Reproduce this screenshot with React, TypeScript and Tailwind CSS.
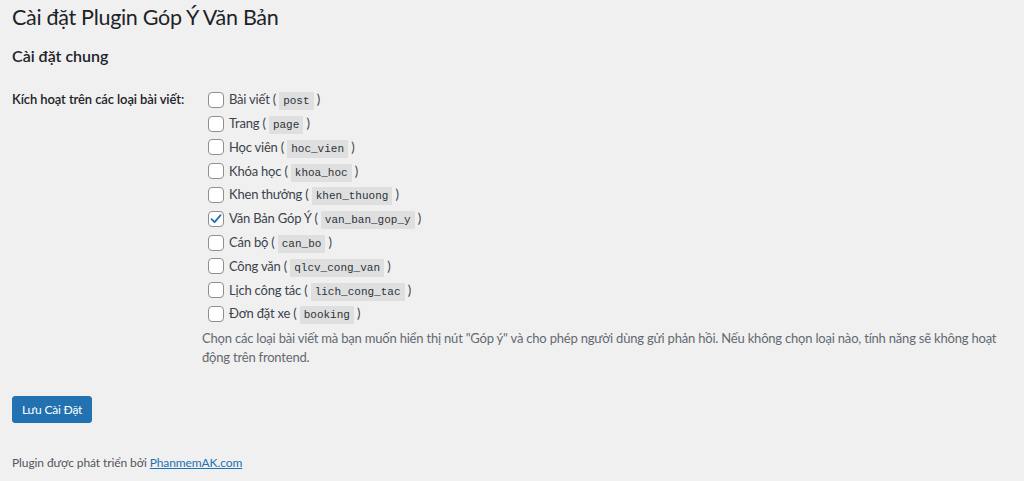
import React from 'react';

const postTypes = [
  { label: 'Bài viết', slug: 'post', checked: false },
  { label: 'Trang', slug: 'page', checked: false },
  { label: 'Học viên', slug: 'hoc_vien', checked: false },
  { label: 'Khóa học', slug: 'khoa_hoc', checked: false },
  { label: 'Khen thưởng', slug: 'khen_thuong', checked: false },
  { label: 'Văn Bản Góp Ý', slug: 'van_ban_gop_y', checked: true },
  { label: 'Cán bộ', slug: 'can_bo', checked: false },
  { label: 'Công văn', slug: 'qlcv_cong_van', checked: false },
  { label: 'Lịch công tác', slug: 'lich_cong_tac', checked: false },
  { label: 'Đơn đặt xe', slug: 'booking', checked: false },
];

const Checkbox: React.FC<{ checked: boolean }> = ({ checked }) => (
  <span className="w-4 h-4 shrink-0 rounded-[4px] border border-[#8c8f94] bg-white flex items-center justify-center">
    {checked && (
      <svg width="14" height="14" viewBox="0 0 14 14" fill="none">
        <path d="M2.5 7.2 L5.6 10.2 L11.6 3.2" stroke="#2271b1" strokeWidth="1.8" strokeLinecap="round" strokeLinejoin="round" />
      </svg>
    )}
  </span>
);

const App: React.FC = () => {
  return (
    <div className="min-h-[481px] w-full bg-[#f0f0f1] text-[#3c434a] font-['Lato','Roboto',sans-serif] text-[13px] px-3 pt-[3px]">
      <h1 className="text-[21.5px] tracking-[-0.3px] leading-[29px] font-normal text-[#1d2327]">Cài đặt Plugin Góp Ý Văn Bản</h1>

      <h2 className="mt-[13px] text-[16px] leading-[22px] font-semibold text-[#1d2327]">Cài đặt chung</h2>

      <div className="flex mt-[21px]">
        <div className="w-[190px] shrink-0 pt-[1px] text-[13px] tracking-[-0.1px] leading-[20px] font-semibold text-[#1d2327]">
          Kích hoạt trên các loại bài viết:
        </div>
        <div className="flex-1 text-[13px] tracking-[-0.2px] text-[#3c434a]">
          <div className="flex flex-col">
            {postTypes.map((t) => (
              <label key={t.slug} className="h-[23.8px] flex items-center gap-[5px] pl-[6px]">
                <Checkbox checked={t.checked} />
                <span className="whitespace-nowrap">
                  {t.label} ({' '}
                  <code className="font-['Liberation_Mono',monospace] tracking-normal text-[11px] text-[#2c3338] bg-[rgba(0,0,0,0.07)] px-[4px] pt-[3px] pb-[3px]">{t.slug}</code>{' '}
                  )
                </span>
              </label>
            ))}
          </div>
          <p className="mt-[3px] text-[13px] tracking-[-0.2px] leading-[19px] text-[#646970] pr-2">
            Chọn các loại bài viết mà bạn muốn hiển thị nút "Góp ý" và cho phép người dùng gửi phản hồi. Nếu không chọn loại nào, tính năng sẽ không hoạt động trên frontend.
          </p>
        </div>
      </div>

      <button className="mt-[29px] h-[27px] px-[9px] rounded-[3px] bg-[#2271b1] border border-[#2271b1] text-white text-[12px] tracking-[-0.2px] leading-[25px]">
        Lưu Cài Đặt
      </button>

      <p className="mt-[30px] text-[12px] tracking-[-0.1px] leading-[19px] text-[#50575e]">
        Plugin được phát triển bởi{' '}
        <a href="#" className="text-[#2271b1] underline">PhanmemAK.com</a>
      </p>
    </div>
  );
};

export default App;
